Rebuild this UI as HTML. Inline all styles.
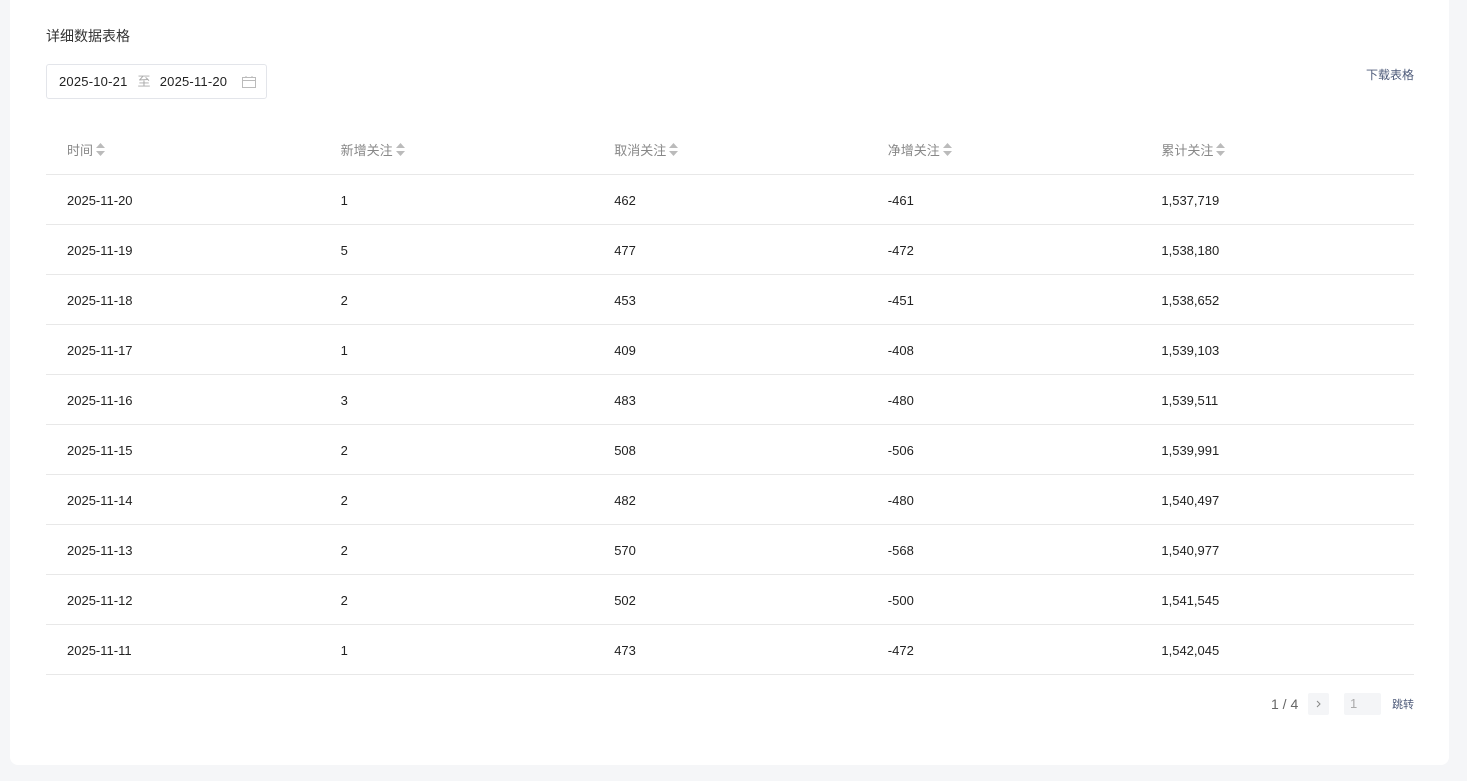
<!DOCTYPE html>
<html><head><meta charset="utf-8"><style>
*{box-sizing:border-box;margin:0;padding:0}
body{width:1467px;height:781px;background:#f5f6f8;font-family:"Liberation Sans","Noto Sans CJK SC",sans-serif;color:#222;position:relative;overflow:hidden}
.card{position:absolute;left:10px;top:-10px;width:1439px;height:775px;background:#fff;border-radius:8px}
.title{position:absolute;left:46px;top:26px;font-size:14px;color:#333}
.date{position:absolute;left:46px;top:64px;width:221px;height:35px;border:1px solid #e3e5ea;border-radius:3px;font-size:13px;line-height:33px;padding-left:12px;color:#222;letter-spacing:0.2px}
.date .to{color:#aaa;margin:0 9px 0 10px}
.cal{position:absolute;right:10px;top:11px}
.dl{position:absolute;right:53px;top:66px;font-size:12px;color:#4e5b7a}
table{position:absolute;left:46px;top:126px;width:1368px;border-collapse:collapse;font-size:13px}
th{height:48px;text-align:left;font-weight:normal;color:#888;padding-left:21px;border-bottom:1px solid #e8e8e8;width:273.6px}
td{height:50px;padding-left:21px;padding-top:2px;border-bottom:1px solid #e8e8e8;color:#222}
.s{display:inline-block;vertical-align:-1px;margin-left:3px}
.pg{position:absolute;top:693px;font-size:14px}
</style></head><body>
<div class="card"></div>
<div class="title">详细数据表格</div>
<div class="date">2025-10-21<span class="to">至</span>2025-11-20
<svg class="cal" width="14" height="12" viewBox="0 0 14 12" fill="none" stroke="#bbb"><rect x="0.5" y="1.5" width="13" height="10"/><line x1="0.5" y1="4.5" x2="13.5" y2="4.5"/><line x1="4" y1="0" x2="4" y2="2"/><line x1="10" y1="0" x2="10" y2="2"/></svg></div>
<div class="dl">下载表格</div>
<table>
<tr><th>时间<svg class="s" width="9" height="13" viewBox="0 0 9 13"><path d="M4.5 0L9 5H0z M0 8h9L4.5 13z" fill="#bbb"/></svg></th><th>新增关注<svg class="s" width="9" height="13" viewBox="0 0 9 13"><path d="M4.5 0L9 5H0z M0 8h9L4.5 13z" fill="#bbb"/></svg></th><th>取消关注<svg class="s" width="9" height="13" viewBox="0 0 9 13"><path d="M4.5 0L9 5H0z M0 8h9L4.5 13z" fill="#bbb"/></svg></th><th>净增关注<svg class="s" width="9" height="13" viewBox="0 0 9 13"><path d="M4.5 0L9 5H0z M0 8h9L4.5 13z" fill="#bbb"/></svg></th><th>累计关注<svg class="s" width="9" height="13" viewBox="0 0 9 13"><path d="M4.5 0L9 5H0z M0 8h9L4.5 13z" fill="#bbb"/></svg></th></tr>
<tr><td>2025-11-20</td><td>1</td><td>462</td><td>-461</td><td>1,537,719</td></tr>
<tr><td>2025-11-19</td><td>5</td><td>477</td><td>-472</td><td>1,538,180</td></tr>
<tr><td>2025-11-18</td><td>2</td><td>453</td><td>-451</td><td>1,538,652</td></tr>
<tr><td>2025-11-17</td><td>1</td><td>409</td><td>-408</td><td>1,539,103</td></tr>
<tr><td>2025-11-16</td><td>3</td><td>483</td><td>-480</td><td>1,539,511</td></tr>
<tr><td>2025-11-15</td><td>2</td><td>508</td><td>-506</td><td>1,539,991</td></tr>
<tr><td>2025-11-14</td><td>2</td><td>482</td><td>-480</td><td>1,540,497</td></tr>
<tr><td>2025-11-13</td><td>2</td><td>570</td><td>-568</td><td>1,540,977</td></tr>
<tr><td>2025-11-12</td><td>2</td><td>502</td><td>-500</td><td>1,541,545</td></tr>
<tr><td>2025-11-11</td><td>1</td><td>473</td><td>-472</td><td>1,542,045</td></tr>
</table>
<div class="pg" style="left:1271px;top:696px;color:#666">1 / 4</div>
<div style="position:absolute;left:1308px;top:693px;width:21px;height:22px;background:#f4f5f7;border-radius:2px"><svg width="21" height="22" viewBox="0 0 21 22" fill="none" stroke="#888"><path d="M9 8l3 3-3 3"/></svg></div>
<div style="position:absolute;left:1344px;top:693px;width:37px;height:22px;background:#f4f5f7;border-radius:2px;font-size:13px;line-height:22px;padding-left:6px;color:#aaa">1</div>
<div style="position:absolute;left:1392px;top:696px;font-size:11px;color:#4e5b7a">跳转</div>
</body></html>
